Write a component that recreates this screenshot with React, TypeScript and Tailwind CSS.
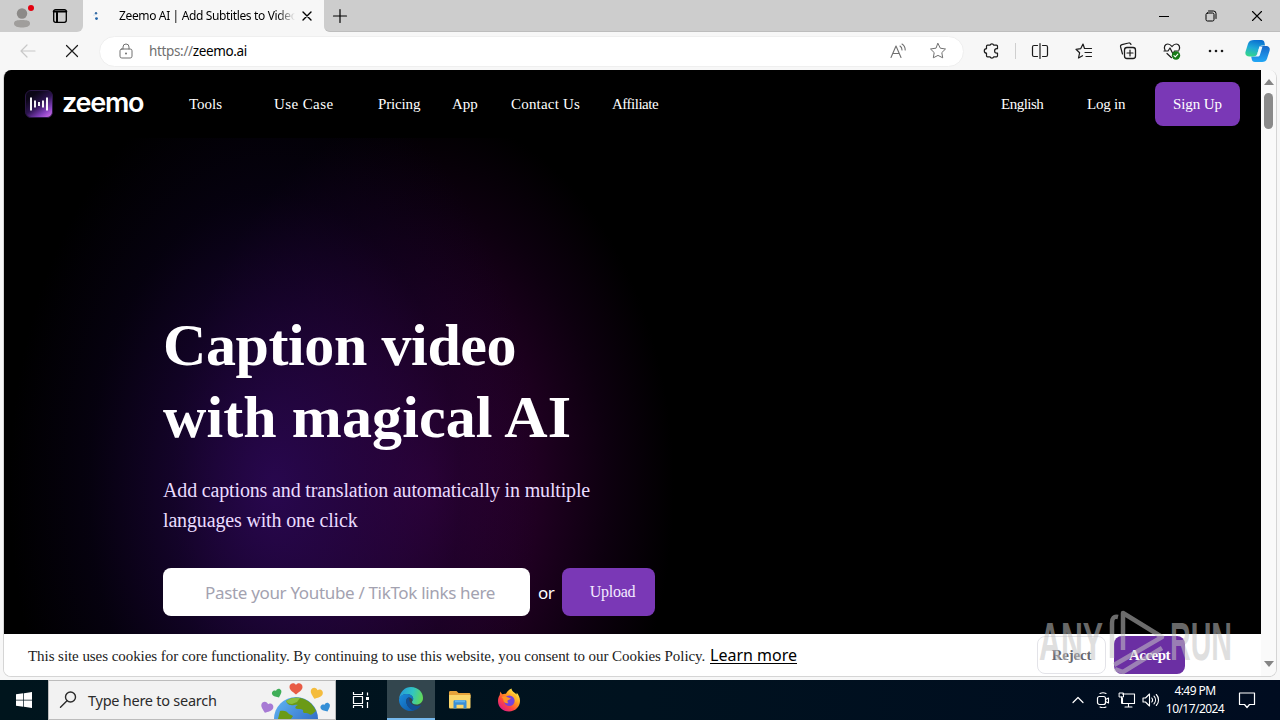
import type { ReactNode } from 'react'

const NAV_ITEMS = [
  { label: 'Tools', className: 'w-[33px] mr-[52px]' },
  { label: 'Use Case', className: 'w-[60px] mr-[44px] tracking-[0.4px]' },
  { label: 'Pricing', className: 'w-[42px] mr-8 tracking-[-0.15px]' },
  { label: 'App', className: 'w-[27px] mr-8' },
  { label: 'Contact Us', className: 'w-[69px] mr-8 tracking-[0.2px]' },
  { label: 'Affiliate', className: 'w-[46px] tracking-[-0.5px]' },
]

export default function App() {
  return (
    <div className="relative flex h-[720px] w-[1280px] flex-col overflow-hidden bg-[#f7f7f7] font-['Noto_Sans',sans-serif] text-black">
      <TabStrip />
      <Toolbar />
      <div className="flex h-[610px] shrink-0 pl-[3px] pr-[3px]">
        <div className="flex h-[607px] flex-1 overflow-hidden rounded-lg border-x border-b border-[#d5d5d5] bg-white">
          <div className="flex w-[1257px] flex-col">
            <Site />
            <CookieBar />
          </div>
          <ScrollBar />
        </div>
      </div>
      <Taskbar />
      <Watermark />
    </div>
  )
}

// --- Browser chrome ---

function Icon({ size = 16, className = '', children }: { size?: number; className?: string; children: ReactNode }) {
  return (
    <svg
      width={size}
      height={size}
      viewBox={`0 0 ${size} ${size}`}
      fill="none"
      stroke="currentColor"
      strokeLinecap="round"
      strokeLinejoin="round"
      className={`shrink-0 ${className}`}
      aria-hidden="true"
    >
      {children}
    </svg>
  )
}

function TabStrip() {
  return (
    <div className="flex h-8 shrink-0 bg-[#f7f7f7]">
      <div className="flex w-[83px] items-center rounded-br-md bg-[#cdcdcd] pl-3">
        <Icon size={24}>
          <circle cx="10" cy="9.500" r="5.200" fill="#8c8a88" stroke="none" />
          <path d="M2 19.500c0-3 3-3.500 8-3.500s8 .5 8 3.500c0 3-4 4-8 4s-8-1-8-4z" fill="#a09e9c" stroke="none" />
          <circle cx="19" cy="4" r="3" fill="#e3000f" stroke="none" />
        </Icon>
        <Icon size={16} className="ml-4">
          <rect x="1.700" y="1.700" width="12.600" height="12.600" rx="2" strokeWidth="1.300" />
          <path d="M1.700 3.500h12.600M5 5v9" strokeWidth="2" />
        </Icon>
      </div>
      <div className="flex w-[241px] items-center rounded-t-lg bg-[#f7f7f7] pl-[9px]">
        <Icon size={8} className="text-[#2b6cb0]">
          <circle cx="4" cy="1.200" r="1.200" fill="#3a6ea5" stroke="none" />
          <circle cx="4.500" cy="6.600" r="1.400" fill="#1f62a8" stroke="none" />
          <circle cx="2" cy="3" r=".6" fill="#9cc3e6" stroke="none" />
        </Icon>
        <span className="ml-[19px] w-[176px] overflow-hidden whitespace-nowrap bg-linear-to-r from-black from-90% to-transparent bg-clip-text text-[12px] tracking-[-0.36px] text-transparent">
          Zeemo AI | Add Subtitles to Video
        </span>
        <Icon size={10} className="ml-[7px]">
          <path d="M1 1l8 8M9 1l-8 8" strokeWidth="1.400" />
        </Icon>
      </div>
      <div className="flex flex-1 items-center rounded-bl-md border-b border-[#bdbdbd] bg-[#cdcdcd]">
        <Icon size={16} className="ml-2">
          <path d="M8 1.500v13M1.500 8h13" strokeWidth="1.200" />
        </Icon>
        <Icon size={10} className="ml-auto">
          <path d="M0 5.500h10" />
        </Icon>
        <Icon size={12} className="ml-9">
          <rect x="1" y="3" width="8" height="8" rx="1.500" />
          <path d="M3.500 1h5A2.500 2.500 0 0 1 11 3.500v5" />
        </Icon>
        <Icon size={12} className="ml-[34px] mr-[17px]">
          <path d="M1.500 1.500l9 9M10.500 1.500l-9 9" strokeWidth="1.100" />
        </Icon>
      </div>
    </div>
  )
}

function Toolbar() {
  return (
    <div className="flex h-[38px] shrink-0 items-center text-[#1b1b1b]">
      <Icon size={18} className="ml-[19px] text-[#c8c8c8]">
        <path d="M16 9H2M8 3L2 9l6 6" strokeWidth="1.200" />
      </Icon>
      <Icon size={14} className="ml-[28px]">
        <path d="M1.500 1.500l11 11M12.500 1.500l-11 11" strokeWidth="1.200" />
      </Icon>
      <div className="ml-5 flex h-[31px] w-[865px] items-center rounded-full border border-[#efefef] bg-white text-[#707070]">
        <Icon size={16} className="ml-[18px]">
          <rect x="2" y="6" width="12" height="9" rx="1.800" />
          <path d="M5 6V4a3 3 0 0 1 6 0v2" />
          <circle cx="8" cy="10.500" r="1" fill="currentColor" stroke="none" />
        </Icon>
        <span className="ml-[15px] w-[200px] whitespace-nowrap text-[13.500px] tracking-[-0.35px]">
          https://<span className="text-black">zeemo.ai</span>
        </span>
        <Icon size={18} className="ml-auto">
          <path d="M2 15.500L7 4l5 11.500M3.700 11.500h6.600M11 4c1.500 1 2 2.500 2 4M13 2c2.300 1.500 3.200 3.700 3.200 6" strokeWidth="1.100" />
        </Icon>
        <Icon size={18} className="ml-[22px] mr-[16px]">
          <path d="M9 1.500l2.300 4.700 5.200.8-3.700 3.600.9 5.200L9 13.400l-4.700 2.400.9-5.200L1.500 7l5.200-.8z" />
        </Icon>
      </div>
      {/* extensions: knobs on top, bottom and left, notch on the right */}
      <Icon size={18} className="ml-[19px]">
        <path d="M4.500 3.200H7a2 2 0 0 1 3.800 0h2.700a1 1 0 0 1 1 1v2.500h-.7a2.200 2.200 0 0 0 0 4.400h.7v2.700a1 1 0 0 1-1 1h-2.700a2 2 0 0 1-3.800 0H4.500a1 1 0 0 1-1-1v-2.700a2.200 2.200 0 0 1 0-4.400V4.200a1 1 0 0 1 1-1z" strokeWidth="1.200" />
      </Icon>
      <div className="ml-[14px] h-4 w-px bg-[#cfcfcf]" />
      <Icon size={18} className="ml-[15px]">
        <path d="M9 1.500v15M6.500 3.500H3A1.500 1.500 0 0 0 1.500 5v8A1.500 1.500 0 0 0 3 14.500h3.500M11.500 3.500H15A1.500 1.500 0 0 1 16.500 5v8a1.500 1.500 0 0 1-1.500 1.500h-3.500" strokeWidth="1.200" />
      </Icon>
      <Icon size={18} className="ml-[26px]">
        <path d="M9.500 6.500L8 2 5.800 6.600 1 7.300l3.600 3.500L3.500 16l4-2.300M9.500 6.500h7M10 10.500h6.500M11 14.500h5.500" strokeWidth="1.200" />
      </Icon>
      <Icon size={18} className="ml-[26px]">
        <rect x="5.500" y="5.500" width="11" height="11" rx="2.500" strokeWidth="1.300" />
        <path d="M11 8v6M8 11h6M3.500 12L1.600 5A2 2 0 0 1 3 2.600L9.500 1A2 2 0 0 1 12 2.500" strokeWidth="1.200" />
      </Icon>
      <Icon size={18} className="ml-[26px]">
        <path d="M2 8C.5 5 2 2 4.800 2 7 2 8 3.300 9 4.500 10 3.300 11 2 13.200 2 16 2 17.500 5 16 8M1 9h4l2-3 3 6 1.500-3h4M4 11.500l4.500 4.200" strokeWidth="1.200" />
        <circle cx="13" cy="13.500" r="4.200" fill="#177b18" stroke="none" />
        <path d="M11 13.700l1.300 1.200 2.500-2.700" stroke="white" strokeWidth="1.100" />
      </Icon>
      <Icon size={18} className="ml-[26px]">
        <circle cx="3" cy="9" r="1.300" fill="currentColor" stroke="none" />
        <circle cx="9" cy="9" r="1.300" fill="currentColor" stroke="none" />
        <circle cx="15" cy="9" r="1.300" fill="currentColor" stroke="none" />
      </Icon>
      <CopilotLogo />
    </div>
  )
}

function CopilotLogo() {
  return (
    <svg width="26" height="24" viewBox="0 0 26 24" className="ml-5 shrink-0" aria-hidden="true">
      <defs>
        <linearGradient id="cpLeft" x1="0.600" y1="0" x2="0.300" y2="1">
          <stop offset="0" stopColor="#0a6fd0" />
          <stop offset="0.500" stopColor="#1fa9d8" />
          <stop offset="1" stopColor="#35d68c" />
        </linearGradient>
        <linearGradient id="cpRight" x1="0.500" y1="0" x2="0.500" y2="1">
          <stop offset="0" stopColor="#1667c9" />
          <stop offset="1" stopColor="#22a7f5" />
        </linearGradient>
      </defs>
      <path d="M15.500 7h5c3.500 0 5 2 4 5l-2.400 7.500c-.9 2.700-2.500 3.500-5 3.500H10c-2 0-3-1-3.300-3l-.5-2.500h3.300c1.600 0 2.300-.9 2.800-2.500z" fill="url(#cpRight)" />
      <path d="M9 1h7.500c1.800 0 2.600 1 3 2.800L20 6.500h-3c-1.700 0-2.500 1-3 2.700l-1.500 5c-.7 2.300-1.900 3.300-4.500 3.300H4.500c-3.300 0-4.800-2-3.900-5L3 4.700C3.900 2 6.200 1 9 1z" fill="url(#cpLeft)" />
      <path d="M14.500 7.500h3l-2.600 8.500c-.4 1.200-1.200 1.500-2.400 1.500H9.300c1.600 0 2.400-.9 2.900-2.400z" fill="#eef8ff" />
    </svg>
  )
}

function ScrollBar() {
  return (
    <div className="flex flex-1 flex-col items-center bg-[#fafafa] pt-[9px]">
      <svg width="10" height="6" viewBox="0 0 10 6" aria-hidden="true">
        <path d="M5 0l5 6H0z" fill="#858585" />
      </svg>
      <div className="mt-2 h-9 w-[9px] rounded-full bg-[#8b8b8b]" />
      <svg width="10" height="6" viewBox="0 0 10 6" className="mb-[9px] mt-auto" aria-hidden="true">
        <path d="M0 0h10L5 6z" fill="#858585" />
      </svg>
    </div>
  )
}

// --- Site content ---

function Site() {
  return (
    <div className="flex h-[564px] shrink-0 flex-col bg-black font-['Liberation_Serif',serif] text-white">
      <header className="flex h-[68px] shrink-0 items-center whitespace-nowrap pl-[21px] text-[15px]">
        <ZeemoMark />
        <span className="ml-[9px] w-[81px] -translate-y-px font-['Inter',sans-serif] text-[27px] font-semibold leading-7 tracking-[-1.25px]">
          zeemo
        </span>
        <nav className="ml-[46px] flex">
          {NAV_ITEMS.map((item) => (
            <span key={item.label} className={item.className}>
              {item.label}
            </span>
          ))}
        </nav>
        <span className="ml-auto w-[43px] tracking-[-0.5px]">English</span>
        <span className="ml-[43px] w-[39px] tracking-[-0.2px]">Log in</span>
        <button className="ml-[29px] mr-[21px] h-11 w-[85px] rounded-lg bg-[#7a38b6] tracking-[-0.1px]">Sign Up</button>
      </header>
      <section className="flex-1 bg-[radial-gradient(ellipse_265px_420px_at_270px_350px,rgba(42,8,84,0.9)_0%,rgba(34,6,70,0.62)_35%,rgba(14,3,36,0.4)_70%,transparent_100%),radial-gradient(ellipse_250px_375px_at_420px_350px,rgb(58,0,60)_0%,rgb(36,0,38)_38%,rgb(13,0,15)_74%,black_100%)] pl-[159px] pt-[171px]">
        <h1 className="flex flex-col whitespace-nowrap text-[60px] font-bold leading-[72px]">
          <span className="tracking-[-0.4px]">Caption video</span>
          <span className="tracking-[0.1px]">with magical AI</span>
        </h1>
        <p className="mt-[22px] whitespace-nowrap text-[20px] leading-[30px] tracking-[-0.155px] text-[#eadcff]">
          Add captions and translation automatically in multiple
          <br />
          languages with one click
        </p>
        <div className="mt-[33px] flex items-center">
          <div className="flex h-12 w-[367px] items-center whitespace-nowrap rounded-lg bg-white pl-[42px] font-['Noto_Sans',sans-serif] text-[17px] tracking-[-0.33px] text-[#a3a2b0]">
            <span className="pt-0.5">Paste your Youtube / TikTok links here</span>
          </div>
          <span className="ml-2 w-6 pt-0.5 font-['Noto_Sans',sans-serif] text-[17px] tracking-[-0.5px]">or</span>
          <button className="h-12 w-[93px] rounded-lg bg-[#7a38b6] pl-[8px] text-[16px] tracking-[-0.25px] text-[#f3eaff]">
            Upload
          </button>
        </div>
      </section>
    </div>
  )
}

function ZeemoMark() {
  return (
    <svg width="28" height="28" viewBox="0 0 28 28" className="shrink-0" aria-hidden="true">
      <defs>
        <linearGradient id="zmBg" x1="0.250" y1="0.200" x2="0.850" y2="1">
          <stop offset="0" stopColor="#0b0616" />
          <stop offset="0.400" stopColor="#2c1450" />
          <stop offset="0.750" stopColor="#8340bd" />
          <stop offset="1" stopColor="#c667e6" />
        </linearGradient>
      </defs>
      <rect x=".5" y=".5" width="27" height="27" rx="5.500" fill="url(#zmBg)" stroke="#2a1744" />
      <path d="M6 7.500v13M10 10.500v7M14 12v4M18 10.500v7M22 7.500v13" stroke="white" strokeWidth="1.900" />
    </svg>
  )
}

function CookieBar() {
  return (
    <div className="flex h-[43px] items-center whitespace-nowrap bg-white pl-6 font-['Liberation_Serif',serif] text-[#212121]">
      <span className="w-[682px] pt-0.5 text-[15px] tracking-[-0.06px]">
        This site uses cookies for core functionality. By continuing to use this website, you consent to our Cookies Policy.
      </span>
      <span className="font-['Noto_Sans',sans-serif] text-[16px] text-black underline underline-offset-2">Learn more</span>
      <button className="ml-auto h-[38px] w-[69px] rounded-lg border border-[#e3e3e8] text-[15px] font-bold tracking-[-0.2px] text-[#686870]">
        Reject
      </button>
      <button className="ml-2 mr-[76px] h-[38px] w-[71px] rounded-lg bg-[#6b2fa3] text-[15px] font-bold tracking-[-0.5px] text-white">
        Accept
      </button>
    </div>
  )
}

// --- Windows taskbar ---

function Taskbar() {
  return (
    <div className="flex h-10 shrink-0 items-center bg-linear-to-r from-[#00151d] via-[#00121f] to-[#000c20] text-white">
      <div className="flex w-12 justify-center">
        <svg width="16" height="16" viewBox="0 0 16 16" fill="white" aria-hidden="true">
          <path d="M0 2.300L7.300 1.300v6.400H0zM8 1.200L16 0v7.700H8zM0 8.400h7.300v6.400L0 13.800zM8 8.400h8V16l-8-1.200z" />
        </svg>
      </div>
      <div className="flex h-10 w-[288px] items-center overflow-hidden border border-[#bcbcbc] bg-[#f2f2f2] text-[#2b2b2b]">
        <Icon size={18} className="ml-[10px]">
          <circle cx="11.500" cy="6" r="5" strokeWidth="1.400" />
          <path d="M8 9.700L1.500 16.300" strokeWidth="1.400" />
        </Icon>
        <span className="ml-[11px] w-[130px] whitespace-nowrap pt-0.5 text-[14.500px] tracking-[-0.25px]">Type here to search</span>
        <EarthDoodle />
      </div>
      <div className="flex w-[51px] justify-center">
        <Icon size={18} className="-translate-x-px">
          <path d="M1.500 1v2.500h9V1M1.500 17v-2.500h9V17M1.500 5.500h9v7h-9zM15.500 1.500v3M15.500 11v6" strokeWidth="1.200" strokeLinecap="butt" />
          <path d="M14 6h3v3h-3z" fill="white" stroke="none" />
        </Icon>
      </div>
      <div className="flex h-10 w-12 items-center justify-center border-b-2 border-[#76b9ed] bg-[#33464e]">
        <EdgeLogo />
      </div>
      <FolderLogo />
      <FirefoxLogo />
      <Icon size={12} className="ml-auto">
        <path d="M1 8.500l5-5 5 5" strokeWidth="1.200" />
      </Icon>
      <Icon size={16} className="ml-[11px]">
        <rect x="2.500" y="4.500" width="8" height="8" rx="2" strokeWidth="1.200" />
        <path d="M10.500 7.500l3-1.500v5l-3-1.500M5 1.500c2-1 4-1 6 0M5 15c2 1 4 1 6 0" strokeWidth="1.100" />
      </Icon>
      <Icon size={18} className="ml-[7px]">
        <path d="M4.500 3h12v9.500h-12V7M10.500 12.500V16M7 16h7" strokeWidth="1.100" />
        <path d="M1.500 2h4v4h-4zM3.500 6v6.500h2" />
      </Icon>
      <Icon size={18} className="ml-[6px]">
        <path d="M1 7h2.500L7.500 3v12l-4-4H1zM9.800 7c1 1.200 1 2.800 0 4M12 5.200c2 2.200 2 5.400 0 7.600M14.300 3.500c3 3.200 3 7.800 0 11" strokeWidth="1.100" />
      </Icon>
      <div className="ml-[5px] flex w-[60px] flex-col items-center whitespace-nowrap text-[12px] leading-[18px] tracking-[-0.55px]">
        <span>4:49 PM</span>
        <span>10/17/2024</span>
      </div>
      <Icon size={18} className="ml-[13px] mr-[24px]">
        <path d="M1.500 2h15v11.500h-5L9 16.500l-2.500-3h-5z" strokeWidth="1.200" />
      </Icon>
    </div>
  )
}

function EarthDoodle() {
  const heart = 'M0 -3C-1.500 -5.800 -6.500 -5 -6.500 -1C-6.500 2.300 -2.500 4.300 0 6.500C2.500 4.300 6.500 2.300 6.500 -1C6.500 -5 1.500 -5.800 0 -3z'
  return (
    <svg width="76" height="38" viewBox="0 0 76 38" className="ml-auto shrink-0" aria-hidden="true">
      <defs>
        <linearGradient id="earthSea" x1="0" y1="0" x2="1" y2="1">
          <stop offset="0" stopColor="#62b8f5" />
          <stop offset="1" stopColor="#2456b8" />
        </linearGradient>
      </defs>
      <circle cx="37" cy="38" r="22" fill="url(#earthSea)" />
      <path d="M27 20c4-3 9-4 14-3 7 1 13 6 16 13-3 2-4 5-7 3-2-2-5 0-6-2 1-3-2-3-5-3-4 0-3-3 0-4-3-1-5 1-7 0-3 0-4-2-5-4zM21 30c4-1 7 0 9 3l4 2-2 3H19z" fill="#6b9a16" />
      <path d="M27 20c4-3 9-4 14-3l-3 4-5 2c-3 0-5-1-6-3z" fill="#8bbf3e" />
      <path d={heart} fill="#e85b45" transform="translate(37 7)" />
      <path d={heart} fill="#3fae57" transform="translate(18 12) scale(.75) rotate(-25)" />
      <path d={heart} fill="#f4bc3c" transform="translate(57.500 12) scale(.95) rotate(20)" />
      <path d={heart} fill="#a77ad4" transform="translate(8 26) scale(.95) rotate(20)" />
      <path d={heart} fill="#358fd6" transform="translate(66.500 26) scale(.75) rotate(-25)" />
    </svg>
  )
}

function EdgeLogo() {
  return (
    <svg width="24" height="24" viewBox="0 0 24 24" aria-hidden="true">
      <defs>
        <linearGradient id="edgeTop" x1="0" y1="0.300" x2="1" y2="0.500">
          <stop offset="0" stopColor="#2599dc" />
          <stop offset="0.550" stopColor="#31c5c1" />
          <stop offset="1" stopColor="#62d957" />
        </linearGradient>
        <linearGradient id="edgeBody" x1="0" y1="0" x2="1" y2="1">
          <stop offset="0" stopColor="#1b8ddd" />
          <stop offset="1" stopColor="#0d55a5" />
        </linearGradient>
      </defs>
      <path d="M0 12C1 4.500 6 0 12 0c7 0 12 5 12 11 0 4-3 6.500-6.500 6.500-3 0-4.500-1.300-4.500-2.500 0-.8 1.200-1.400 1.200-3.200C14.200 9 11 7 7.500 7 4 7 1.300 9 0 12z" fill="url(#edgeTop)" />
      <path d="M0 12c1.300-3.300 4-5 7.500-5 3.700 0 6.700 2 6.700 4.800 0 .7-.2 1.300-.5 1.800C12.900 11 11 9.800 9 10.800 6.500 12 6.500 17 10 20.500c2.200 2.200 4.500 3 6.500 2.600C15 23.700 13.500 24 12 24 5 24-.5 18.500 0 12z" fill="url(#edgeBody)" />
      <path d="M8.500 11c-2 1.800-1.700 6 1.500 9.500 2.200 2.200 4.500 3 6.500 2.600 2.500-1 4.500-2.700 5.800-5-2 .9-4.500 1.200-7 .3-3.500-1.200-5.300-3.900-5.100-6.400.1-.7.3-1.200.7-1.700-.8 0-1.700.2-2.400.7z" fill="#124e94" />
    </svg>
  )
}

function FolderLogo() {
  return (
    <svg width="22" height="20" viewBox="0 0 22 20" className="ml-[14px]" aria-hidden="true">
      <path d="M0 2.500C0 1.500.5 1 1.500 1h6l2 2H20c1 0 1.500.5 1.500 1.500V8H0z" fill="#e7a33a" />
      <path d="M0 5h21.500v12c0 1-.5 1.500-1.500 1.500H1.500C.5 18.500 0 18 0 17z" fill="#fbd66b" />
      <path d="M4.500 18.500v-7c0-.8.4-1.200 1.200-1.200h10.600c.8 0 1.200.4 1.200 1.200v7h-3v-3.800h-7v3.800z" fill="#3a8fd6" />
      <path d="M6 10.300h10v2H6z" fill="#5fb4ee" />
    </svg>
  )
}

function FirefoxLogo() {
  return (
    <svg width="24" height="24" viewBox="0 0 24 24" className="ml-[26px]" aria-hidden="true">
      <defs>
        <linearGradient id="ffBody" x1="0.850" y1="0.100" x2="0.200" y2="0.900">
          <stop offset="0" stopColor="#fff04a" />
          <stop offset="0.400" stopColor="#ff9a1f" />
          <stop offset="0.700" stopColor="#ff4a3d" />
          <stop offset="1" stopColor="#e3207e" />
        </linearGradient>
      </defs>
      <path d="M3.500 3.500c.3 1.300 1 2 2 2.700C6.600 5.700 8 5.500 9 5.800 10 3.500 12 1.500 14.500.5c.2 3 3.500 4 5 6 .3-.8.2-1.400 0-2 2.200 2.300 3.500 5.300 3.500 8.300 0 6-4.700 10.700-11 10.700S1 19 1 13c0-2.300.6-4.300 1.800-6 0-1.300.1-2.500.7-3.500z" fill="url(#ffBody)" />
      <circle cx="12.300" cy="12.800" r="5.300" fill="#7443dc" />
      <path d="M4.500 9c2-1.500 5-.8 6.500.5 1.200.3 2.500.5 2.800 1-.5 1-2 1.200-3 1.700-.7.800-.3 2 .7 2.800-3 .8-5.500-1-5.200-4z" fill="#ff9425" />
      <path d="M14 6.500c3.500 1 5.300 4.500 4.300 8 2.200-2.500 1.700-6-1.300-8.500z" fill="#ffb52b" />
    </svg>
  )
}

// Recorder watermark, drawn over the page and the cookie bar.
function Watermark() {
  return (
    <svg
      width="220"
      height="76"
      viewBox="0 0 220 76"
      className="pointer-events-none absolute left-[1030px] top-[604px]"
      fill="#c4c4c4"
      fillOpacity="0.550"
      fontFamily="'Liberation Sans', sans-serif"
      fontSize="53"
      fontWeight="700"
      aria-hidden="true"
    >
      <text x="9" y="56" textLength="64" lengthAdjust="spacingAndGlyphs">ANY</text>
      <text x="140" y="56" textLength="62" lengthAdjust="spacingAndGlyphs">RUN</text>
      <g fill="none" stroke="#c4c4c4" strokeOpacity="0.550" strokeWidth="4.500" strokeLinejoin="round">
        <path d="M93 46V9l39 24-48 28" />
        <path d="M82 54V19c0-5 2-7 6-6M85 65l8 3 39-24" />
      </g>
    </svg>
  )
}
